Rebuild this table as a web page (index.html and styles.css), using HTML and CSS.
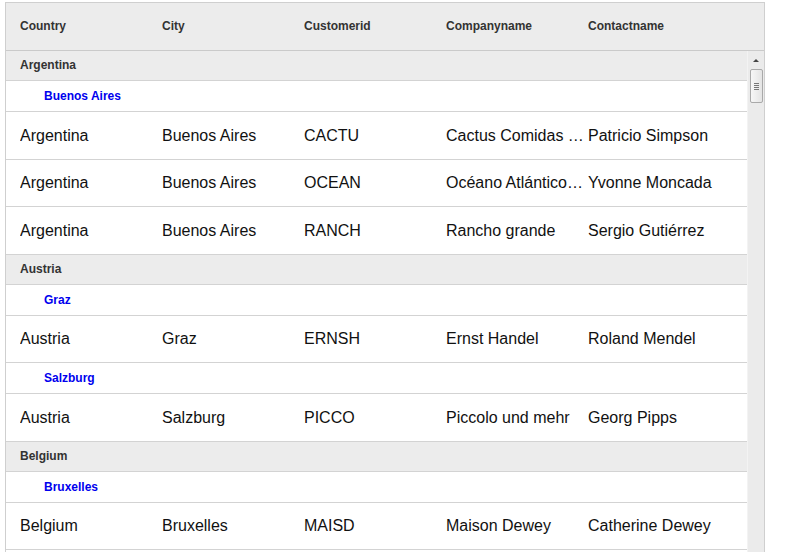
FILE: index.html
```html
<!DOCTYPE html>
<html>
<head>
<meta charset="utf-8">
<link rel="stylesheet" href="styles.css">
</head>
<body>
<div class="grid">
  <div class="header cols">
    <div class="cell">Country</div>
    <div class="cell">City</div>
    <div class="cell">Customerid</div>
    <div class="cell">Companyname</div>
    <div class="cell">Contactname</div>
  </div>
  <div class="body">
    <div class="rows">
      <div class="group">Argentina</div>
      <div class="subgroup">Buenos Aires</div>
      <div class="row cols"><div class="cell">Argentina</div><div class="cell">Buenos Aires</div><div class="cell">CACTU</div><div class="cell">Cactus Comidas para llevar</div><div class="cell">Patricio Simpson</div></div>
      <div class="row cols"><div class="cell">Argentina</div><div class="cell">Buenos Aires</div><div class="cell">OCEAN</div><div class="cell">Océano Atlántico Ltda.</div><div class="cell">Yvonne Moncada</div></div>
      <div class="row cols"><div class="cell">Argentina</div><div class="cell">Buenos Aires</div><div class="cell">RANCH</div><div class="cell">Rancho grande</div><div class="cell">Sergio Gutiérrez</div></div>
      <div class="group">Austria</div>
      <div class="subgroup">Graz</div>
      <div class="row cols"><div class="cell">Austria</div><div class="cell">Graz</div><div class="cell">ERNSH</div><div class="cell">Ernst Handel</div><div class="cell">Roland Mendel</div></div>
      <div class="subgroup">Salzburg</div>
      <div class="row cols"><div class="cell">Austria</div><div class="cell">Salzburg</div><div class="cell">PICCO</div><div class="cell">Piccolo und mehr</div><div class="cell">Georg Pipps</div></div>
      <div class="group">Belgium</div>
      <div class="subgroup">Bruxelles</div>
      <div class="row cols"><div class="cell">Belgium</div><div class="cell">Bruxelles</div><div class="cell">MAISD</div><div class="cell">Maison Dewey</div><div class="cell">Catherine Dewey</div></div>
    </div>
    <div class="scrollbar">
      <div class="arrow"><span class="tri"></span></div>
      <div class="thumb"><span class="grip"></span><span class="grip"></span><span class="grip"></span><span class="grip"></span></div>
    </div>
  </div>
</div>
</body>
</html>
```
FILE: styles.css
```css
html, body {
  margin: 0;
  padding: 0;
  background: #fff;
  overflow: hidden;
}
body {
  font-family: "Liberation Sans", Arial, sans-serif;
  height: 552px;
}
.grid {
  margin: 2px 0 0 5px;
  width: 758px;
  height: 560px;
  border: 1px solid #cfcfcf;
  box-sizing: content-box;
  display: flex;
  flex-direction: column;
  overflow: hidden;
}
.cols {
  display: grid;
  grid-template-columns: repeat(5, 138px);
  column-gap: 4px;
  padding-left: 14px;
  align-items: center;
}
.cell {
  white-space: nowrap;
  overflow: hidden;
  text-overflow: ellipsis;
}
.header {
  flex: 0 0 48px;
  height: 48px;
  box-sizing: border-box;
  background: #ececec;
  border-bottom: 1px solid #cacaca;
  padding-bottom: 2px;
  font-size: 12px;
  font-weight: bold;
  color: #333;
}
.body {
  display: flex;
  flex: 1 1 auto;
  min-height: 0;
}
.rows {
  width: 741px;
}
.group {
  height: 30px;
  box-sizing: border-box;
  background: #ececec;
  border-bottom: 1px solid #d3d3d3;
  font-size: 12px;
  font-weight: bold;
  color: #333;
  padding-left: 14px;
  padding-bottom: 1px;
  display: flex;
  align-items: center;
}
.subgroup {
  height: 31px;
  box-sizing: border-box;
  background: #fff;
  border-bottom: 1px solid #d3d3d3;
  font-size: 12px;
  font-weight: bold;
  color: #0000ee;
  padding-left: 38px;
  display: flex;
  align-items: center;
}
.row {
  height: 47.5px;
  box-sizing: border-box;
  border-bottom: 1px solid #d3d3d3;
  padding-top: 1px;
  font-size: 16px;
  color: #111;
}
.scrollbar {
  width: 17px;
  background: #ebebeb;
  border-left: 1px solid #f3f3f3;
  box-sizing: border-box;
  display: flex;
  flex-direction: column;
  align-items: center;
}
.arrow {
  height: 18px;
  width: 100%;
  display: flex;
  align-items: center;
  justify-content: center;
}
.tri {
  width: 0;
  height: 0;
  border-left: 3px solid transparent;
  border-right: 3px solid transparent;
  border-bottom: 3px solid #444;
}
.thumb {
  width: 13px;
  height: 34px;
  box-sizing: border-box;
  border: 1px solid #a9a9a9;
  border-radius: 2px;
  background: linear-gradient(to right, #f7f7f7, #e4e4e4);
  display: flex;
  flex-direction: column;
  align-items: center;
  justify-content: center;
  gap: 1px;
}
.grip {
  width: 5px;
  height: 1px;
  background: #777;
}
```
